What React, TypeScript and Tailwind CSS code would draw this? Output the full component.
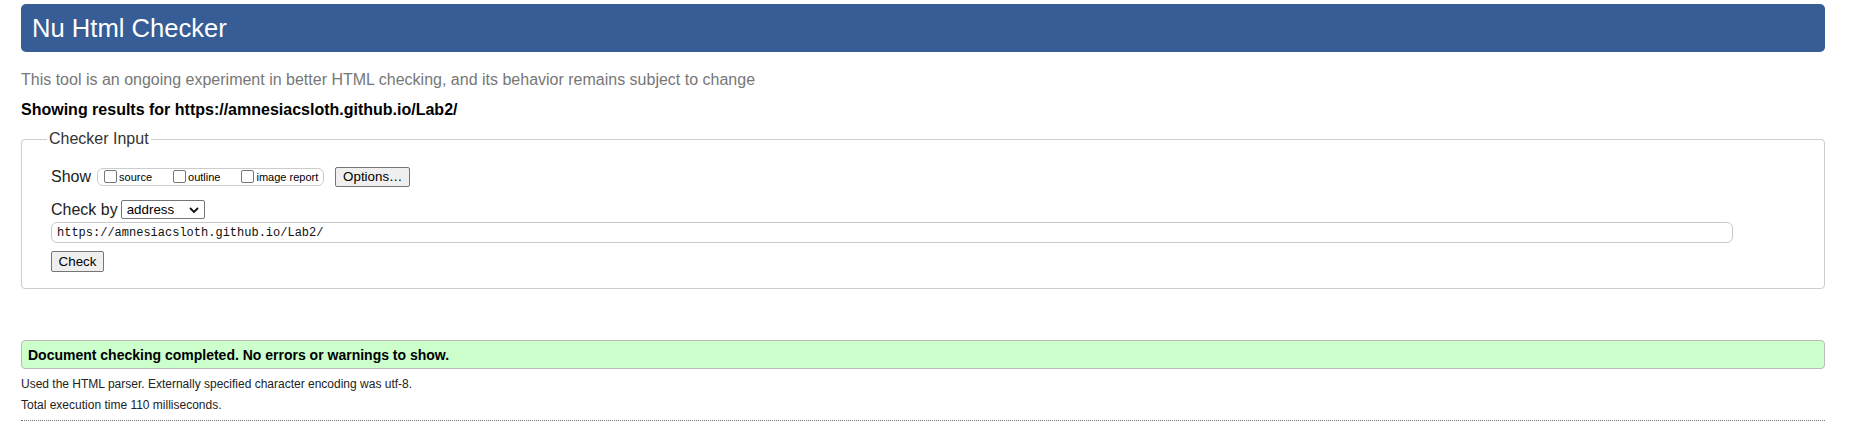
export default function App() {
  const checks = ['source', 'outline', 'image report'];

  return (
    <div className="min-h-[438px] bg-white pl-[21px] pr-[24px] pt-[4px] font-['Liberation_Sans',Arial,sans-serif] text-[16px] leading-[18px] text-[#222]">
      {/* Header */}
      <h1 className="flex h-[48px] items-center rounded-[5px] bg-[#365d95] pl-[11px] text-[25.6px] font-normal leading-[29px] text-white">
        Nu Html Checker
      </h1>

      <p className="mt-[19px] text-[#777]">
        This tool is an ongoing experiment in better HTML checking, and its behavior remains subject to change
      </p>
      <p className="mt-[12px] font-bold text-black">Showing results for https://amnesiacsloth.github.io/Lab2/</p>

      {/* Checker input */}
      <fieldset className="mt-[11px] rounded-[4px] border border-[#ccc] pb-[16px] pl-[29px] pr-[91px] pt-[19px]">
        <legend className="-ml-[4px] px-[2px] text-[#333]">Checker Input</legend>

        <div className="flex h-[20px] items-center">
          <span>Show</span>
          <div className="ml-[6px] flex h-[18px] items-center gap-[21px] rounded-[6px] border border-[#ccc] pl-[6px] pr-[5px] text-[11px] leading-[13px] text-black">
            {checks.map((c) => (
              <label key={c} className="flex items-center gap-[2px]">
                <span className="mb-[2px] h-[13px] w-[13px] rounded-[2px] border border-[#767676] bg-white" />
                <span>{c}</span>
              </label>
            ))}
          </div>
          <button
            type="button"
            className="ml-[11px] h-[20px] w-[75px] rounded-[2px] border border-[#767676] bg-[#efefef] text-[13.33px] leading-none text-black"
          >
            Options…
          </button>
        </div>

        <div className="mt-[13px] flex h-[19px] items-center">
          <span>Check by</span>
          <div className="ml-[3px] flex h-[19px] w-[84px] items-center justify-between rounded-[2px] border border-[#767676] bg-white pl-[5px] pr-[5px] text-[13.33px] leading-none text-black">
            <span>address</span>
            <svg width="10" height="6" viewBox="0 0 10 6" fill="none">
              <path d="M1 1 L5 5 L9 1" stroke="#111" strokeWidth="1.8" />
            </svg>
          </div>
        </div>

        <div className="mt-[3px] flex h-[21px] w-full items-center rounded-[6px] border border-[#c8c8c8] pl-[5px] font-['Liberation_Mono','DejaVu_Sans_Mono',monospace] text-[12px] leading-none text-[#111]">
          https://amnesiacsloth.github.io/Lab2/
        </div>

        <button
          type="button"
          className="mt-[8px] h-[21px] w-[53px] rounded-[2px] border border-[#767676] bg-[#efefef] text-[13.33px] leading-none text-black"
        >
          Check
        </button>
      </fieldset>

      {/* Results */}
      <div className="mt-[51px] flex h-[29px] items-center rounded-[4px] border border-[#bbb] bg-[#ccffcc] pl-[6px] text-[14px] font-bold leading-[16px] text-black">
        Document checking completed. No errors or warnings to show.
      </div>
      <p className="mt-[8px] text-[12px] leading-[14px] text-[#222]">
        Used the HTML parser. Externally specified character encoding was utf-8.
      </p>
      <p className="mt-[7px] text-[12px] leading-[14px] text-[#222]">Total execution time 110 milliseconds.</p>
      <div className="mt-[8px] border-t border-dotted border-[#777]" />
    </div>
  );
}
